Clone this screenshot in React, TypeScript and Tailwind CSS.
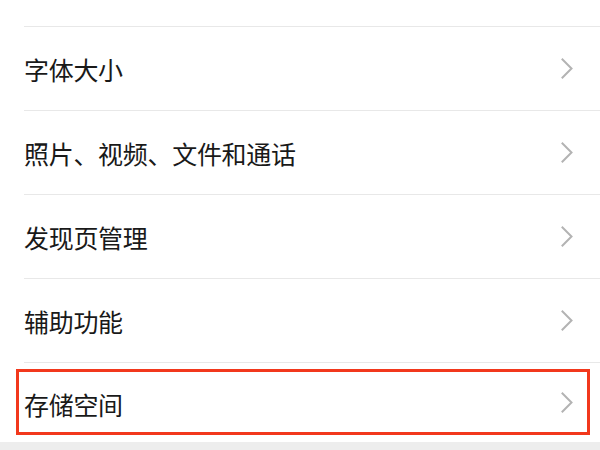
import React from "react";

const items = ["字体大小", "照片、视频、文件和通话", "发现页管理", "辅助功能", "存储空间"];

function Chevron() {
  return (
    <svg width="12" height="21" viewBox="0 0 12 21" fill="none" className="shrink-0">
      <path d="M1.5 1.5 L10.5 10.5 L1.5 19.5" stroke="#b3b3b3" strokeWidth="2" strokeLinecap="square" />
    </svg>
  );
}

export default function App() {
  return (
    <div
      className="relative w-[600px] h-[450px] overflow-hidden bg-[#ededed]"
      style={{ fontFamily: '"Noto Sans CJK SC", "Noto Sans", sans-serif' }}
    >
      <div className="bg-white">
        <div className="h-[26px]" />
        {items.map((t, i) => (
          <div key={t} className="pl-[24px]">
            <div className="border-t border-[#e8e8e8]">
              <div
                className={`flex items-center justify-between pr-[27px] ${i === items.length - 1 ? "h-[79px]" : "h-[83px]"}`}
              >
                <span className={`text-[25px] leading-none text-[#191919] tracking-[-0.3px] ${i === items.length - 1 ? "mt-[3px]" : "mt-[1px]"}`}>{t}</span>
                <Chevron />
              </div>
            </div>
          </div>
        ))}
      </div>
      <div className="absolute left-[16px] top-[369px] w-[574px] h-[66px] border-[3px] border-[#f2381c]" />
    </div>
  );
}
